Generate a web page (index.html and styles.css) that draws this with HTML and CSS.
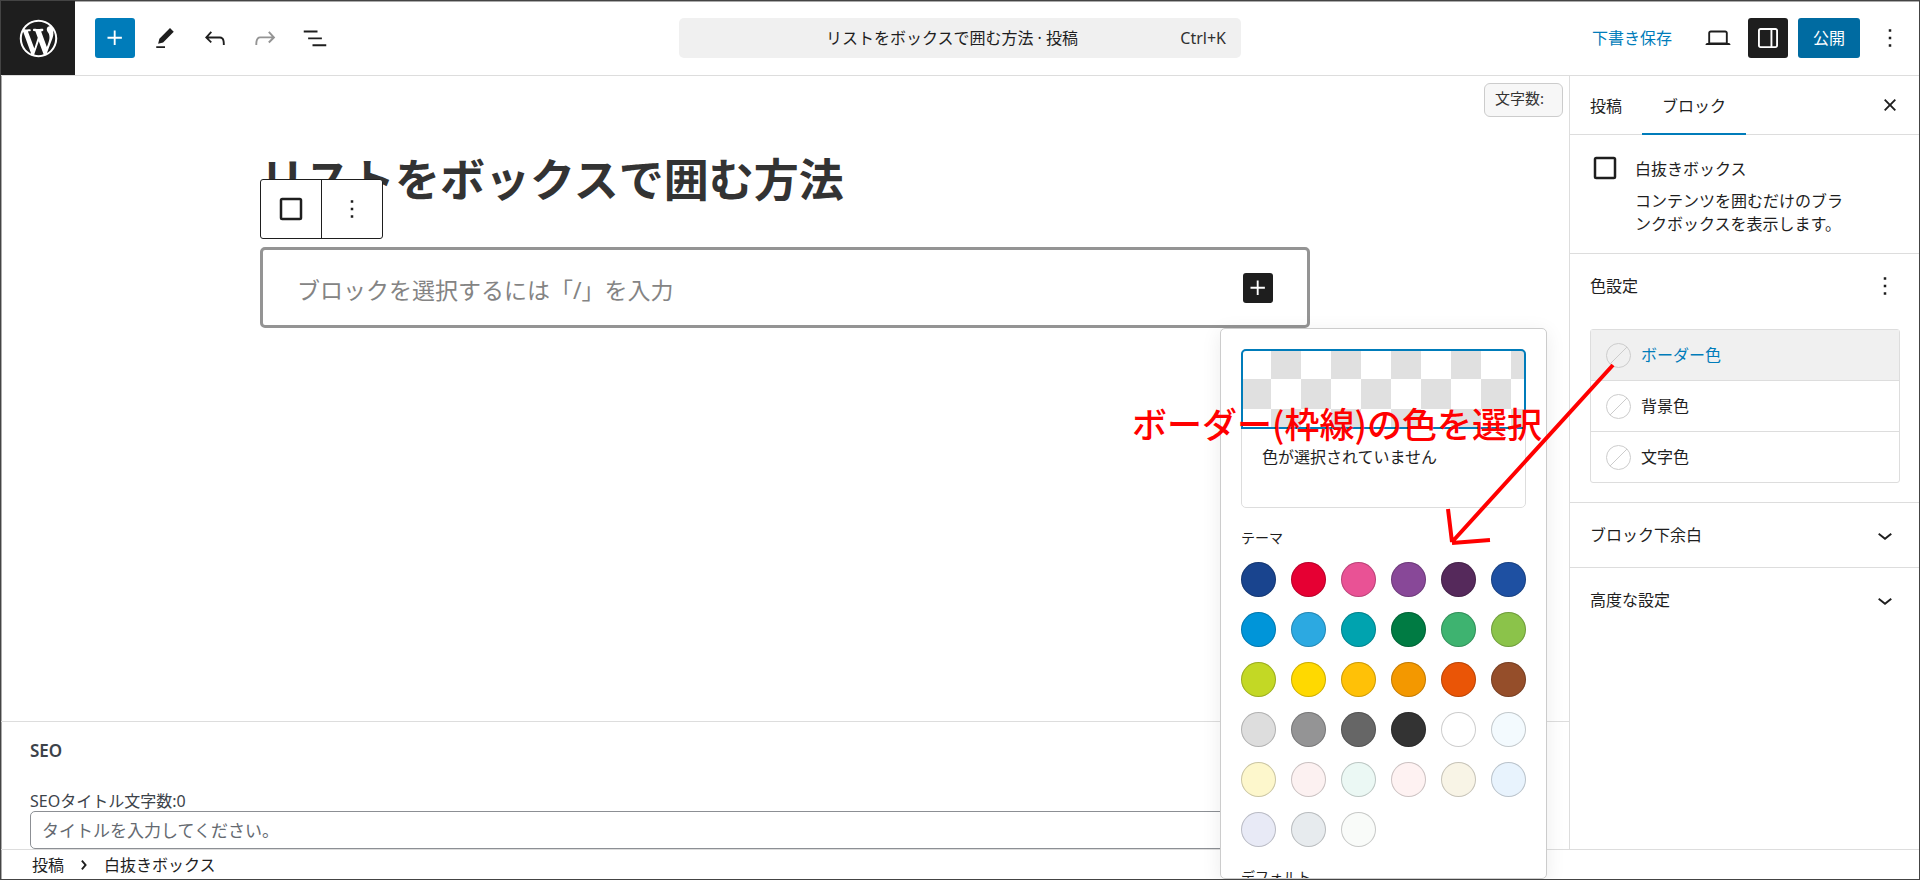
FILE: index.html
```html
<!DOCTYPE html>
<html lang="ja">
<head>
<meta charset="utf-8">
<title>リストをボックスで囲む方法 · 投稿</title>
<link rel="stylesheet" href="styles.css">
</head>
<body>
<div class="app">
  <header class="topbar">
    <a class="logo" href="#" aria-label="WordPress">
      <svg viewBox="-2 -2 24 24"><path d="M20 10c0-5.51-4.49-10-10-10C4.48 0 0 4.49 0 10c0 5.52 4.48 10 10 10 5.51 0 10-4.48 10-10zM7.78 15.37L4.37 6.22c.55-.02 1.17-.08 1.17-.08.5-.06.44-1.13-.06-1.11 0 0-1.45.11-2.37.11-.18 0-.37 0-.58-.01C4.12 2.69 6.87 1.11 10 1.11c2.33 0 4.45.87 6.05 2.34-.68-.11-1.65.39-1.65 1.58 0 .74.45 1.36.9 2.1.35.61.55 1.36.55 2.46 0 1.49-1.4 5-1.4 5l-3.03-8.37c.54-.02.82-.17.82-.17.5-.05.44-1.25-.06-1.22 0 0-1.44.12-2.38.12-.87 0-2.33-.12-2.33-.12-.5-.03-.56 1.2-.06 1.22l.92.08 1.26 3.41zM17.41 10c.24-.64.74-1.87.43-4.25.7 1.29 1.05 2.71 1.05 4.25 0 3.29-1.73 6.24-4.4 7.78.97-2.59 1.94-5.2 2.92-7.78zM6.1 18.09C3.12 16.65 1.11 13.53 1.11 10c0-1.3.23-2.48.72-3.59C3.25 10.3 4.67 14.2 6.1 18.09zm4.03-6.63l2.58 6.98c-.86.29-1.76.45-2.71.45-.79 0-1.57-.11-2.29-.33.81-2.38 1.62-4.74 2.42-7.1z"/></svg>
    </a>
    <div class="tools">
      <button class="tool tool-add" aria-label="ブロック挿入"><svg class="icon" viewBox="0 0 24 24"><path d="M11 12.5V17.5H12.5V12.5H17.5V11H12.5V6H11V11H6V12.5H11Z"/></svg></button>
      <button class="tool" aria-label="ツール"><svg class="icon" viewBox="0 0 24 24"><path d="m19 7-3-3-8.5 8.5-1 4 4-1L19 7Zm-7 11.500H5V20h7v-1.500Z"/></svg></button>
      <button class="tool" aria-label="元に戻す"><svg class="icon" viewBox="0 0 24 24"><path d="M18.3 11.7c-.6-.6-1.400-.9-2.300-.9H6.700l2.900-3.300-1.100-1-4.500 5L8.500 16l1-1-2.700-2.700H16c.5 0 .9.2 1.300.5 1 1 1 3.400 1 4.500v.3h1.500v-.2c0-1.500 0-4.300-1.500-5.700z"/></svg></button>
      <button class="tool tool-off" aria-label="やり直し" disabled><svg class="icon" viewBox="0 0 24 24"><path d="M15.6 6.500l-1.100 1 2.900 3.300H8c-.9 0-1.700.3-2.300.9-1.400 1.500-1.400 4.200-1.400 5.600v.2h1.500v-.3c0-1.100 0-3.500 1-4.500.3-.3.7-.5 1.300-.5h9.200L14.500 15l1.100 1.100 4.600-4.600-4.600-5z"/></svg></button>
      <button class="tool" aria-label="リスト表示"><svg class="icon" viewBox="0 0 24 24"><path d="M3 6h11v1.500H3V6Zm3.500 5.500h11V13h-11v-1.500ZM21 17H10v1.500h11V17Z"/></svg></button>
    </div>
    <button class="command"><span class="command-title">リストをボックスで囲む方法 · 投稿</span><span class="command-key">Ctrl+K</span></button>
    <div class="actions">
      <button class="draft">下書き保存</button>
      <button class="tool" aria-label="表示"><svg class="icon" viewBox="0 0 24 24"><path d="M20.500 16h-.7V8c0-1.100-.9-2-2-2H6.200c-1.100 0-2 .9-2 2v8h-.7c-.8 0-1.500.7-1.500 1.500h20c0-.8-.7-1.500-1.500-1.500zM5.700 8c0-.3.2-.5.5-.5h11.600c.3 0 .5.2.5.5v7.600H5.700V8z"/></svg></button>
      <button class="tool tool-on" aria-label="設定"><svg class="icon" viewBox="0 0 24 24"><path d="M18 4H6c-1.100 0-2 .9-2 2v12c0 1.100.9 2 2 2h12c1.100 0 2-.9 2-2V6c0-1.100-.9-2-2-2zm-4 14.500H6c-.3 0-.5-.2-.5-.5V6c0-.3.2-.5.5-.5h8v13zm4.500-.5c0 .3-.2.5-.5.5h-2.500v-13H18c.3 0 .5.2.5.5v12z"/></svg></button>
      <button class="publish">公開</button>
      <button class="tool" aria-label="オプション"><svg class="icon" viewBox="0 0 24 24"><path d="M13 19h-2v-2h2v2zm0-6h-2v-2h2v2zm0-6h-2V5h2v2z"/></svg></button>
    </div>
  </header>

  <div class="body">
    <main class="main">
      <div class="canvas">
        <div class="counter">文字数:</div>
        <div class="post">
          <h1 class="post-title">リストをボックスで囲む方法</h1>
          <div class="block">
            <div class="block-tools">
              <button class="block-tool" aria-label="白抜きボックス"><svg class="icon" viewBox="0 0 24 24"><rect class="outline" x="4" y="4" width="16" height="16" rx="1"/></svg></button>
              <button class="block-tool" aria-label="オプション"><svg class="icon" viewBox="0 0 24 24"><path d="M13 19h-2v-2h2v2zm0-6h-2v-2h2v2zm0-6h-2V5h2v2z"/></svg></button>
            </div>
            <p class="prompt">ブロックを選択するには「/」を入力</p>
            <button class="block-add" aria-label="ブロックを追加"><svg class="icon" viewBox="0 0 24 24"><path d="M11 12.5V17.5H12.5V12.5H17.5V11H12.5V6H11V11H6V12.5H11Z"/></svg></button>
          </div>
        </div>
      </div>
      <section class="seo">
        <h2 class="seo-title">SEO</h2>
        <label class="seo-label" for="seo-input">SEOタイトル文字数:0</label>
        <input class="seo-input" id="seo-input" type="text" placeholder="タイトルを入力してください。">
      </section>
    </main>

    <aside class="sidebar">
      <div class="tabs">
        <button class="tab">投稿</button>
        <button class="tab tab-current">ブロック</button>
        <button class="close" aria-label="閉じる"><svg class="icon" viewBox="0 0 24 24"><path d="M12 13.060l3.712 3.713 1.061-1.060L13.061 12l3.712-3.712-1.060-1.060L12 10.938 8.288 7.227l-1.061 1.060L10.939 12l-3.712 3.712 1.060 1.061L12 13.061z"/></svg></button>
      </div>
      <div class="card">
        <svg class="icon" viewBox="0 0 24 24"><rect class="outline" x="4" y="4" width="16" height="16" rx="1"/></svg>
        <div>
          <h2 class="card-title">白抜きボックス</h2>
          <p class="card-text">コンテンツを囲むだけのブランクボックスを表示します。</p>
        </div>
      </div>
      <section class="colors">
        <div class="colors-head">
          <h2 class="panel-title">色設定</h2>
          <button class="mini" aria-label="色設定のオプション"><svg class="icon" viewBox="0 0 24 24"><path d="M13 19h-2v-2h2v2zm0-6h-2v-2h2v2zm0-6h-2V5h2v2z"/></svg></button>
        </div>
        <div class="color-list">
          <button class="color-row color-row-current"><svg class="none" viewBox="0 0 25 25"><circle cx="12.500" cy="12.500" r="12"/><path d="M4 21 21 4"/></svg>ボーダー色</button>
          <button class="color-row"><svg class="none" viewBox="0 0 25 25"><circle cx="12.500" cy="12.500" r="12"/><path d="M4 21 21 4"/></svg>背景色</button>
          <button class="color-row"><svg class="none" viewBox="0 0 25 25"><circle cx="12.500" cy="12.500" r="12"/><path d="M4 21 21 4"/></svg>文字色</button>
        </div>
      </section>
      <button class="fold">ブロック下余白<svg class="icon" viewBox="0 0 24 24"><path d="M17.500 11.600L12 16l-5.500-4.400.9-1.200L12 14l4.500-3.600 1 1.200z"/></svg></button>
      <button class="fold">高度な設定<svg class="icon" viewBox="0 0 24 24"><path d="M17.500 11.600L12 16l-5.500-4.400.9-1.200L12 14l4.500-3.600 1 1.200z"/></svg></button>
    </aside>

    <div class="popover">
      <div class="current">
        <button class="current-swatch" aria-label="カスタムカラー"></button>
        <p class="current-name">色が選択されていません</p>
      </div>
      <h3 class="palette-title">テーマ</h3>
      <div class="palette">
        <button class="swatch" style="background:#19448e"></button>
        <button class="swatch" style="background:#e60033"></button>
        <button class="swatch" style="background:#e95295"></button>
        <button class="swatch" style="background:#884898"></button>
        <button class="swatch" style="background:#55295b"></button>
        <button class="swatch" style="background:#1e50a2"></button>
        <button class="swatch" style="background:#0095d9"></button>
        <button class="swatch" style="background:#2ca9e1"></button>
        <button class="swatch" style="background:#00a3af"></button>
        <button class="swatch" style="background:#007b43"></button>
        <button class="swatch" style="background:#3eb370"></button>
        <button class="swatch" style="background:#8bc34a"></button>
        <button class="swatch" style="background:#c3d825"></button>
        <button class="swatch" style="background:#ffd900"></button>
        <button class="swatch" style="background:#ffc107"></button>
        <button class="swatch" style="background:#f39800"></button>
        <button class="swatch" style="background:#ea5506"></button>
        <button class="swatch" style="background:#954e2a"></button>
        <button class="swatch" style="background:#dddddd"></button>
        <button class="swatch" style="background:#949495"></button>
        <button class="swatch" style="background:#666666"></button>
        <button class="swatch" style="background:#333333"></button>
        <button class="swatch" style="background:#ffffff"></button>
        <button class="swatch" style="background:#f3fafe"></button>
        <button class="swatch" style="background:#fdf7cc"></button>
        <button class="swatch" style="background:#fcf1f1"></button>
        <button class="swatch" style="background:#ebf8f4"></button>
        <button class="swatch" style="background:#fef2f2"></button>
        <button class="swatch" style="background:#f8f4e6"></button>
        <button class="swatch" style="background:#e8f3fd"></button>
        <button class="swatch" style="background:#e8eaf6"></button>
        <button class="swatch" style="background:#e7ebee"></button>
        <button class="swatch" style="background:#f9fbf9"></button>
      </div>
      <h3 class="palette-title">デフォルト</h3>
    </div>

    <div class="note">
      <p class="note-text">ボーダー(枠線)の色を選択</p>
      <svg class="arrow" viewBox="0 0 170 184"><path d="M167 3 6 180M2 147 6 180M44 178 6 181"/></svg>
    </div>
  </div>

  <footer class="crumbs">
    <a class="crumb" href="#">投稿</a>
    <svg class="icon" viewBox="0 0 24 24"><path d="M10.862 8.040L14.280 12.029L10.862 16.017L9.723 15.040L12.305 12.029L9.723 9.017Z"/></svg>
    <span class="crumb">白抜きボックス</span>
  </footer>
</div>
</body>
</html>
```

FILE: styles.css
```css
* { box-sizing: border-box; }

body {
  margin: 0;
  font-family: "Noto Sans", "Noto Sans CJK JP", sans-serif;
  font-size: 16px;
  line-height: 24px;
  color: #1e1e1e;
  background: #fff;
}

h1, h2, h3, p { margin: 0; font-weight: 400; font-size: inherit; }

button {
  margin: 0;
  padding: 0;
  border: 0;
  background: none;
  font: inherit;
  color: inherit;
}

a { color: inherit; text-decoration: none; }

.app {
  display: flex;
  flex-direction: column;
  height: 100vh;
  overflow: hidden;
  border: 1px solid #444;
  box-shadow: inset 1px 1px #aaa;
}

.icon { display: block; flex: none; width: 30px; height: 30px; fill: currentColor; }
.outline { fill: none; stroke: currentColor; stroke-width: 2; }

/* Top bar */
.topbar {
  display: grid;
  grid-template-columns: 1fr 562px 1fr;
  align-items: center;
  height: 75px;
  border-bottom: 1px solid #ddd;
}

.logo {
  grid-area: 1 / 1;
  display: grid;
  place-items: center;
  width: 74px;
  height: 74px;
  background: #1e1e1e;
}
.logo svg { width: 45px; height: 45px; fill: #fff; }

.tools { grid-area: 1 / 1; display: flex; gap: 10px; margin-left: 94px; }
.tool { display: grid; place-items: center; width: 40px; height: 40px; border-radius: 3px; }
.tool-add { background: #007cba; color: #fff; }
.tool-on { background: #1e1e1e; color: #fff; }
.tool-off { color: #949494; }

.command {
  display: grid;
  align-items: center;
  height: 40px;
  border-radius: 5px;
  background: #f0f0f0;
}
.command-title, .command-key { grid-area: 1 / 1; }
.command-title { padding-right: 16px; }
.command-key { justify-self: end; margin-right: 15px; color: #2f2f2f; }

.actions { display: flex; justify-content: flex-end; align-items: center; gap: 10px; margin-right: 9px; }
.draft { margin-right: 16px; color: #007cba; }
.publish { width: 62px; height: 40px; border-radius: 3px; background: #006ba1; color: #fff; }

/* Work area */
.body {
  position: relative;
  flex: 1;
  min-height: 0;
  display: grid;
  grid-template-columns: 1fr 350px;
}
.main { display: flex; flex-direction: column; min-height: 0; }
.canvas { position: relative; flex: 1; padding: 74px 30px 0; }

.counter {
  position: absolute;
  top: 7px;
  right: 6px;
  width: 79px;
  height: 34px;
  padding: 2px 10px;
  border: 1px solid #ccc;
  border-radius: 6px;
  background: #f7f7f7;
  font-size: 15px;
  color: #333;
}

.post { max-width: 1050px; margin: 0 auto; }
.post-title { font-size: 45px; line-height: 60px; font-weight: 700; color: #333; }

.block {
  position: relative;
  display: flex;
  align-items: center;
  justify-content: space-between;
  height: 81px;
  margin-top: 37px;
  padding: 0 34px;
  border: 3px solid #949494;
  border-radius: 5px;
}
.block-tools {
  position: absolute;
  left: -3px;
  bottom: 86px;
  display: flex;
  width: 123px;
  height: 60px;
  border: 1px solid #1e1e1e;
  border-radius: 3px;
  background: #fff;
}
.block-tool { flex: 1; display: grid; place-items: center; }
.block-tool + .block-tool { border-left: 1px solid #1e1e1e; }
.prompt { padding-top: 4px; font-size: 23px; line-height: 32px; color: #848484; }
.block-add { width: 30px; height: 30px; border-radius: 3px; background: #1e1e1e; color: #fff; }

/* Meta box */
.seo {
  height: 128px;
  padding: 17px 30px 0 29px;
  border-top: 1px solid #ddd;
  color: #3c434a;
  overflow: hidden;
}
.seo-title { font-size: 17px; font-weight: 600; color: #3c434a; }
.seo-label { display: block; padding-top: 28px; line-height: 20px; }
.seo-input {
  display: block;
  width: 100%;
  height: 38px;
  padding: 0 11px;
  border: 1px solid #8c8f94;
  border-radius: 5px;
  font: inherit;
  font-size: 17px;
}
.seo-input::placeholder { color: #646970; opacity: 1; }

/* Settings sidebar */
.sidebar { border-left: 1px solid #ddd; }
.tabs { display: flex; height: 59px; border-bottom: 1px solid #ddd; }
.tab { margin-bottom: -1px; padding: 1px 20px 0; }
.tab-current { box-shadow: inset 0 -2px #007cba; }
.close { display: grid; place-items: center; width: 40px; margin: 0 9px 0 auto; }

.card {
  display: flex;
  gap: 15px;
  padding: 18px 66px 17px 20px;
  border-bottom: 1px solid #ddd;
}
.card-title { line-height: 33px; margin-bottom: 4px; }
.card-text { line-height: 23px; }

.colors { padding: 15px 19px 19px 20px; border-bottom: 1px solid #ddd; }
.colors-head { display: flex; align-items: center; justify-content: space-between; height: 34px; }
.mini { width: 30px; }
.color-list { margin-top: 26px; border: 1px solid #ddd; border-radius: 3px; }
.color-row {
  display: flex;
  align-items: center;
  gap: 10px;
  width: 100%;
  height: 50px;
  padding: 0 15px;
}
.color-row + .color-row { height: 51px; border-top: 1px solid #ddd; }
.color-row-current { background: #f0f0f0; color: #007cba; }
.none { width: 25px; height: 25px; fill: none; stroke: #ccc; }

.fold {
  display: flex;
  align-items: center;
  justify-content: space-between;
  width: 100%;
  height: 64px;
  padding: 0 19px 0 20px;
}
.fold + .fold { border-top: 1px solid #ddd; }

/* Colour picker */
.popover {
  position: absolute;
  top: 252px;
  right: 372px;
  bottom: -30px;
  z-index: 2;
  width: 327px;
  padding: 20px;
  border: 1px solid #ccc;
  border-radius: 5px;
  background: #fff;
  box-shadow: 0 4px 20px rgba(0, 0, 0, .08);
  overflow: hidden;
}
.current { height: 159px; border: 1px solid #ddd; border-radius: 5px; }
.current-swatch {
  display: block;
  width: calc(100% + 2px);
  height: 80px;
  margin: -1px;
  border: 2px solid #007cba;
  border-radius: 5px 5px 0 0;
  background: repeating-conic-gradient(#e0e0e0 0 25%, #fff 0 50%) border-box 0 0 / 60px 60px;
}
.current-name { padding: 17px 20px; }
.palette-title { margin-top: 20px; font-size: 14px; line-height: 20px; }
.palette { display: grid; grid-template-columns: repeat(6, 35px); gap: 15px; margin-top: 14px; }
.swatch { height: 35px; border-radius: 50%; box-shadow: inset 0 0 0 1px rgba(0, 0, 0, .2); }

/* Callout drawn over the editor */
.note { position: absolute; top: 286px; right: 303px; z-index: 3; width: 484px; pointer-events: none; }
.note-text {
  position: absolute;
  top: 35px;
  left: 0;
  font-size: 35px;
  line-height: 52px;
  font-weight: 500;
  color: #f00;
  font-family: "Noto Sans CJK JP", sans-serif;
  white-space: nowrap;
}
.arrow { display: block; width: 170px; height: 184px; margin-left: auto; fill: none; stroke: #f00; stroke-width: 4; }

/* Breadcrumb bar */
.crumbs {
  display: flex;
  align-items: center;
  gap: 5px;
  height: 30px;
  padding: 0 31px;
  border-top: 1px solid #ddd;
}
```
